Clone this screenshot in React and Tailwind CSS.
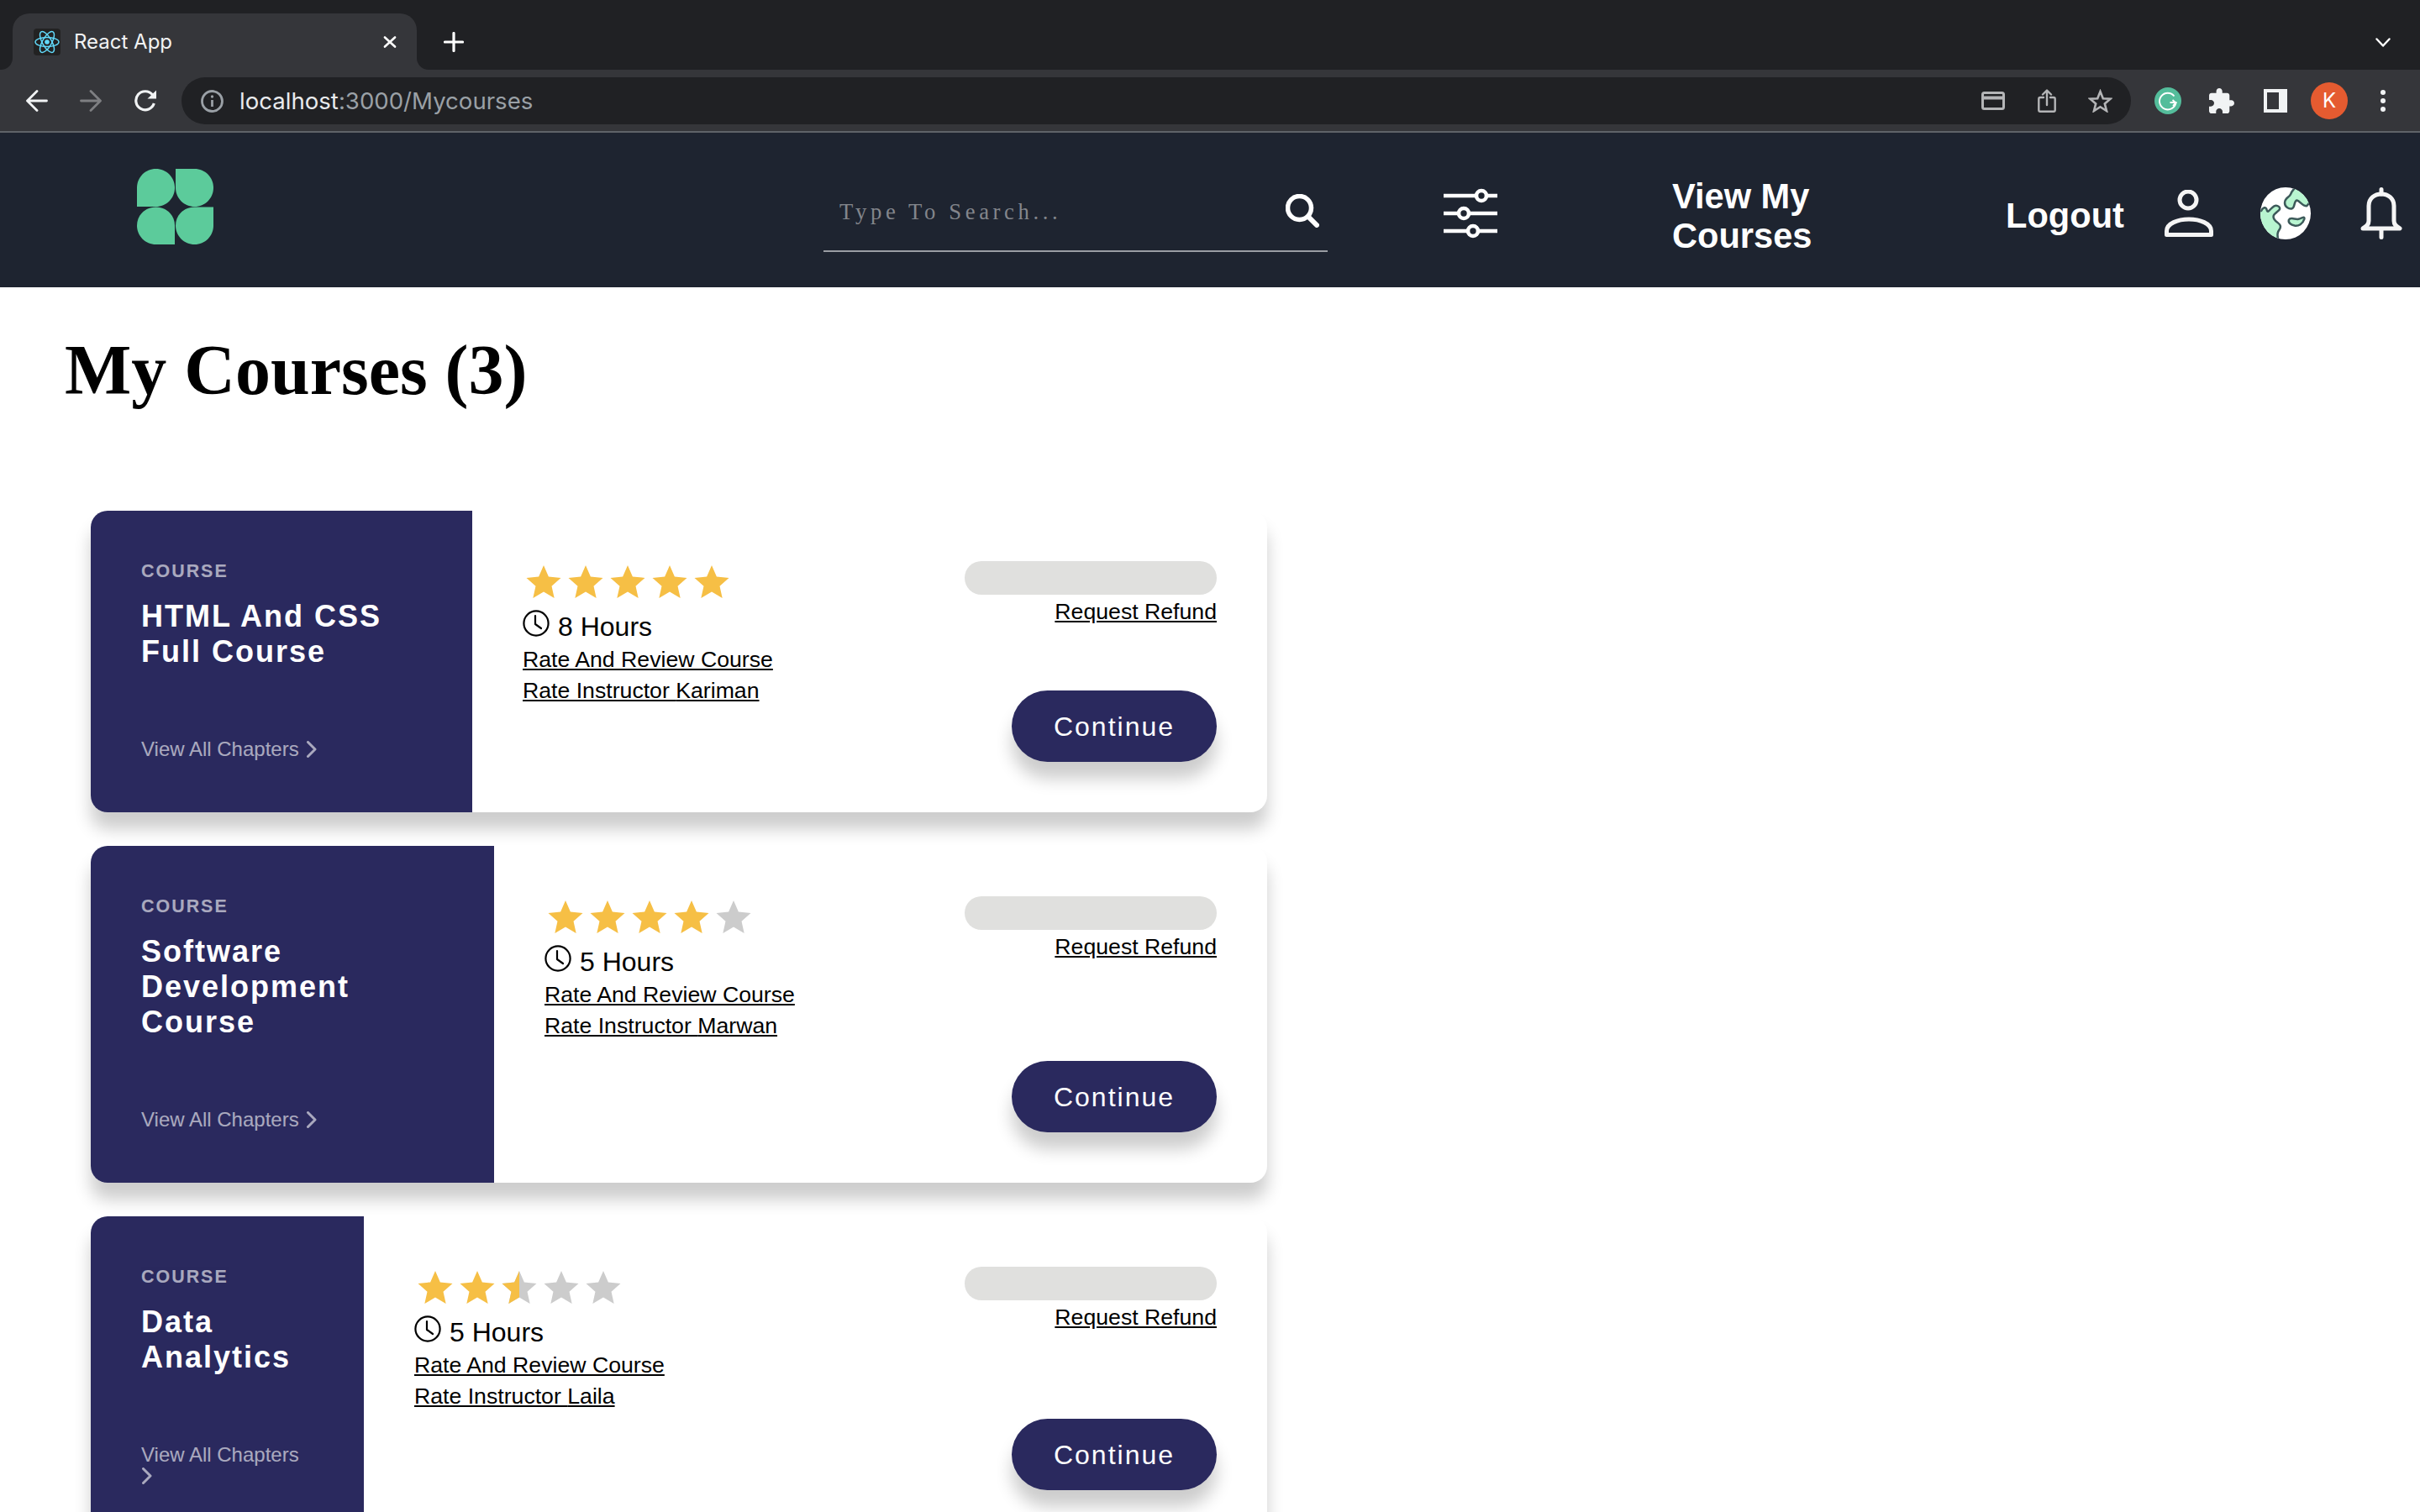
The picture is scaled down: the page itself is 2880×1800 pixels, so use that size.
import React from "react";

const SANS = "font-['Liberation_Sans',Arial,sans-serif]";
const UI = "font-['Inter',sans-serif]";

function Star({ kind }) {
  const full = "25,5 30.88,18.46 45.5,19.9 34.51,29.64 37.67,43.98 25,36.55 12.33,43.98 15.49,29.64 4.5,19.9 19.12,18.46";
  const half = "25,5 25,36.55 12.33,43.98 15.49,29.64 4.5,19.9 19.12,18.46";
  return (
    <svg viewBox="0 0 50 50" className="w-[50px] h-[50px] shrink-0">
      <polygon points={full} fill={kind === "full" ? "#f6bf45" : "#cccccc"} />
      {kind === "half" && <polygon points={half} fill="#f6bf45" />}
    </svg>
  );
}

function Clock() {
  return (
    <svg viewBox="0 0 32 32" className="w-[32px] h-[32px] shrink-0" fill="none" stroke="#000" strokeWidth="2.2" strokeLinecap="round" strokeLinejoin="round">
      <circle cx="16" cy="16" r="14.6" />
      <path d="M15 7 V17 L22 22" />
    </svg>
  );
}

function Chevron() {
  return (
    <svg viewBox="0 0 13 20" className="w-[13px] h-[20px] shrink-0" fill="none" stroke="#fff" strokeWidth="3" strokeLinecap="round" strokeLinejoin="round">
      <path d="M2.5 1.5 L11 10 L2.5 18.5" />
    </svg>
  );
}

function Course({ title, panel, rating, hours, instructor }) {
  return (
    <div className={`flex w-[1400px] rounded-[20px] overflow-hidden bg-white shadow-[0_20px_20px_rgba(0,0,0,0.2)] ${SANS}`}>
      <div className={`${panel} shrink-0 bg-[#2a295e] text-white pt-[60px] px-[60px]`}>
        <h6 className="text-[21.44px] leading-[25px] font-bold tracking-[2px] opacity-60">COURSE</h6>
        <h2 className="text-[36px] leading-[42px] font-bold tracking-[2px] mt-[20px]">{title}</h2>
        <div className="mt-[80px] flex flex-wrap items-center gap-x-[8px] text-[24px] leading-[30px] opacity-60">
          <span>View All Chapters</span>
          <Chevron />
        </div>
      </div>
      <div className="flex-1 flex justify-between p-[60px] text-black">
        <div>
          <div className="flex h-[60px]">
            {rating.map((k, i) => <Star key={i} kind={k} />)}
          </div>
          <div className="flex items-start gap-[10px] text-[32px] leading-[37px]">
            <span className="-mt-[2px]"><Clock /></span>
            <span>{hours}</span>
          </div>
          <div className="mt-[2px] text-[26.67px] leading-[37px] underline">Rate And Review Course</div>
          <div className="text-[26.67px] leading-[37px] underline">Rate Instructor {instructor}</div>
        </div>
        <div className="w-[300px] flex flex-col items-end justify-between">
          <div className="w-full flex flex-col items-end">
            <div className="w-full h-[40px] rounded-[20px] bg-[#e0e0de]" />
            <div className="mt-[2px] text-[26.67px] leading-[37px] underline">Request Refund</div>
          </div>
          <div className="w-[244px] h-[85px] rounded-[100px] bg-[#2a295e] text-white text-[32px] tracking-[2px] flex items-center justify-center shadow-[0_20px_20px_rgba(0,0,0,0.2)]">Continue</div>
        </div>
      </div>
    </div>
  );
}

function ChromeBar() {
  return (
    <div className={UI}>
      <div className="h-[83px] bg-[#202124] flex pt-[16px] pl-[15px] relative">
        <div className="absolute left-0 bottom-0 w-[15px] h-[15px] bg-[#35363a]">
          <div className="w-full h-full bg-[#202124] rounded-br-[14px]" />
        </div>
        <div className="w-[481px] h-[67px] rounded-t-[20px] bg-[#35363a] flex items-start pt-[18px] pl-[25px] relative">
          <svg viewBox="0 0 32 32" className="w-[32px] h-[32px] rounded-[4px] bg-[#222222] shrink-0" fill="none" stroke="#61dafb" strokeWidth="1.5">
            <ellipse cx="16" cy="16" rx="14" ry="5.5" />
            <ellipse cx="16" cy="16" rx="14" ry="5.5" transform="rotate(60 16 16)" />
            <ellipse cx="16" cy="16" rx="14" ry="5.5" transform="rotate(120 16 16)" />
            <circle cx="16" cy="16" r="2.8" fill="#61dafb" stroke="none" />
          </svg>
          <span className="ml-[16px] text-[24px] leading-[32px] text-[#f1f3f4]">React App</span>
          <svg viewBox="0 0 16 14" className="w-[16px] h-[14px] absolute left-[441px] top-[27px]" stroke="#fff" strokeWidth="2.6" strokeLinecap="round">
            <path d="M2 1.5 L14 12.5 M14 1.5 L2 12.5" />
          </svg>
          <div className="absolute right-[-15px] bottom-0 w-[15px] h-[15px] bg-[#35363a]">
            <div className="w-full h-full bg-[#202124] rounded-bl-[14px]" />
          </div>
        </div>
        <svg viewBox="0 0 24 24" className="w-[24px] h-[24px] ml-[32px] mt-[22px]" stroke="#fff" strokeWidth="3.2" strokeLinecap="round">
          <path d="M12 1.5 V22.5 M1.5 12 H22.5" />
        </svg>
        <svg viewBox="0 0 18 11" className="w-[18px] h-[11px] absolute left-[2827px] top-[45px]" fill="none" stroke="#fff" strokeWidth="2.4" strokeLinecap="round" strokeLinejoin="round">
          <path d="M1.5 1.5 L9 9.5 L16.5 1.5" />
        </svg>
      </div>
      <div className="h-[75px] bg-[#35363a] border-b-[2px] border-[#5f6368] flex items-start pl-[31px]">
        <svg viewBox="0 0 26 26" className="w-[26px] h-[26px] mt-[24px] shrink-0" fill="none" stroke="#f1f3f4" strokeWidth="2.8" strokeLinecap="round" strokeLinejoin="round">
          <path d="M24.5 13 H2 M13 1.5 L1.5 13 L13 24.5" />
        </svg>
        <svg viewBox="0 0 26 26" className="w-[26px] h-[26px] mt-[24px] ml-[38px] shrink-0" fill="none" stroke="#7e7f82" strokeWidth="2.8" strokeLinecap="round" strokeLinejoin="round">
          <path d="M1.5 13 H24 M13 1.5 L24.5 13 L13 24.5" />
        </svg>
        <svg viewBox="0 0 27 26" className="w-[27px] h-[26px] mt-[24px] ml-[38px] shrink-0" fill="none" stroke="#f1f3f4" strokeWidth="3.2">
          <path d="M22.5 6 A11 11 0 1 0 24.3 16" />
          <polygon points="27,0.5 27,10.5 16.5,10.5" fill="#f1f3f4" stroke="none" />
        </svg>
        <div className="w-[2320px] h-[56px] ml-[30px] mt-[9px] shrink-0 rounded-[28px] bg-[#202124] flex items-center pl-[23px] relative">
          <svg viewBox="0 0 27 27" className="w-[27px] h-[27px] shrink-0" fill="none" stroke="#9aa0a6" strokeWidth="2.8">
            <circle cx="13.5" cy="13.5" r="12" />
            <path d="M13.5 12 V20" />
            <circle cx="13.5" cy="8" r="1.7" fill="#9aa0a6" stroke="none" />
          </svg>
          <span className="ml-[19px] text-[27.6px] leading-[36px] text-[#e8eaed]">localhost<span className="text-[#9aa0a6]">:3000/Mycourses</span></span>
          <div className="flex-1" />
          <svg viewBox="0 0 28 22" className="w-[28px] h-[22px] shrink-0" fill="none" stroke="#b4b5b7" strokeWidth="3">
            <rect x="1.5" y="1.5" width="25" height="19" rx="2" />
            <path d="M1.5 7.5 H26.5" strokeWidth="4" />
          </svg>
          <svg viewBox="0 0 22 28" className="w-[22px] h-[28px] ml-[39px] shrink-0" fill="none" stroke="#b4b5b7" strokeWidth="2.4" strokeLinejoin="round" strokeLinecap="round">
            <path d="M7 10 H3 C2 10 1.3 10.7 1.3 11.7 V25 C1.3 26 2 26.7 3 26.7 H19 C20 26.7 20.7 26 20.7 25 V11.7 C20.7 10.7 20 10 19 10 H15" />
            <path d="M11 19 V2 M6 6.5 L11 1.5 L16 6.5" />
          </svg>
          <svg viewBox="0 0 29 28" className="w-[29px] h-[28px] ml-[38px] shrink-0" fill="none" stroke="#b4b5b7" strokeWidth="2.6" strokeLinejoin="miter">
            <polygon points="14.5,3 17.8,11.2 26.5,11.7 19.8,17.4 22,26 14.5,21.2 7,26 9.2,17.4 2.5,11.7 11.2,11.2" />
          </svg>
          <div className="w-[22px] shrink-0" />
        </div>
        <svg viewBox="0 0 32 32" className="w-[32px] h-[32px] ml-[28px] mt-[21px] shrink-0" fill="none">
          <circle cx="16" cy="16" r="16" fill="#54bd9b" />
          <path d="M23.5 10.5 A9.8 9.8 0 1 0 25.5 18 H18.5" stroke="#fff" strokeWidth="1.9" />
          <path d="M21.5 15 L25.5 18.5 L22 22" stroke="#fff" strokeWidth="1.9" />
        </svg>
        <svg viewBox="2 1 21 21" className="w-[30px] h-[30px] ml-[33px] mt-[22px] shrink-0" fill="#f1f3f4">
          <path d="M20.5 11H19V7c0-1.1-.9-2-2-2h-4V3.5C13 2.12 11.88 1 10.5 1S8 2.12 8 3.5V5H4c-1.1 0-1.99.9-1.99 2v3.8H3.5c1.49 0 2.7 1.21 2.7 2.7s-1.21 2.7-2.7 2.7H2V20c0 1.1.9 2 2 2h3.8v-1.5c0-1.49 1.21-2.7 2.7-2.7 1.49 0 2.7 1.21 2.7 2.7V22H17c1.1 0 2-.9 2-2v-4h1.5c1.38 0 2.5-1.12 2.5-2.5S21.88 11 20.5 11z" />
        </svg>
        <svg viewBox="0 0 28 28" className="w-[28px] h-[28px] ml-[35px] mt-[23px] shrink-0">
          <rect width="28" height="28" fill="#f1f3f4" />
          <rect x="4" y="4" width="14" height="20" fill="#35363a" />
        </svg>
        <div className="w-[44px] h-[44px] ml-[28px] mt-[15px] shrink-0 rounded-full bg-[#e55b30] text-white text-[24px] flex items-center justify-center">K</div>
        <svg viewBox="0 0 6 26" className="w-[6px] h-[26px] ml-[39px] mt-[24px] shrink-0" fill="#f1f3f4">
          <circle cx="3" cy="3" r="3" />
          <circle cx="3" cy="13" r="3" />
          <circle cx="3" cy="23" r="3" />
        </svg>
      </div>
    </div>
  );
}

function Header() {
  return (
    <div className={`h-[184px] bg-[#1e2430] flex items-start pl-[163px] text-white ${SANS}`}>
      <svg viewBox="0 0 91 90" className="w-[91px] h-[90px] mt-[43px] shrink-0" fill="#5ccb9b">
        <path d="M0 22.5 C0 10 10 0 22.5 0 C35 0 45 10 45 22.5 C45 35 35 45 22.5 45 H0 Z" />
        <path d="M46 0 H68.5 C81 0 91 10 91 22.5 C91 35 81 45 68.5 45 C56 45 46 35 46 22.5 Z" />
        <path d="M0 67.5 C0 55 10 45.5 22.5 45.5 C35 45.5 45 55 45 67.5 V90 H22.5 C10 90 0 80 0 67.5 Z" />
        <path d="M46 67.5 C46 55 56 45.5 68.5 45.5 H91 V67.5 C91 80 81 90 68.5 90 C56 90 46 80 46 67.5 Z" />
      </svg>
      <div className="w-[600px] h-[82px] ml-[726px] mt-[60px] shrink-0 border-b-[2px] border-[#9a9da3] flex items-start justify-between pl-[19px] pr-[10px] pt-[14px]">
        <span className="mt-[2px] font-['Liberation_Serif',serif] text-[26.67px] leading-[36px] tracking-[4.6px] text-[#83868c]">Type To Search...</span>
        <svg viewBox="0 0 40 40" className="-mt-[1px] w-[40px] h-[40px] shrink-0" fill="none" stroke="#fff">
          <circle cx="16.5" cy="16.5" r="14" strokeWidth="5.5" />
          <path d="M27 27 L37 37" strokeWidth="6" strokeLinecap="round" />
        </svg>
      </div>
      <svg viewBox="0 0 64 64" className="w-[64px] h-[64px] ml-[138px] mt-[64px] shrink-0" fill="#1e2430" stroke="#fff" strokeWidth="4.6">
        <path d="M1 11 H63 M1 32 H63 M1 53 H63" strokeLinecap="round" />
        <circle cx="45" cy="11" r="6" />
        <circle cx="24" cy="32" r="6" />
        <circle cx="35" cy="53" r="6" />
      </svg>
      <div className="w-[170px] ml-[208px] mt-[52px] shrink-0 text-[41.6px] leading-[47px] font-bold">View My Courses</div>
      <div className="w-[140px] ml-[227px] mt-[75px] shrink-0 text-[41.6px] leading-[47px] font-bold whitespace-nowrap">Logout</div>
      <svg viewBox="0 0 58 56" className="w-[58px] h-[56px] ml-[49px] mt-[68px] shrink-0" fill="none" stroke="#f5f5f5" strokeWidth="5">
        <circle cx="28" cy="12" r="10" />
        <path d="M2.5 53.5 H55.5 V49 C55.5 40 42 35 29 35 C16 35 2.5 40 2.5 49 Z" strokeLinejoin="round" />
      </svg>
      <svg viewBox="0 0 64 66" className="w-[62px] h-[66px] ml-[55px] mt-[63px] shrink-0">
        <defs>
          <clipPath id="earth"><ellipse cx="32" cy="33" rx="31" ry="32" /></clipPath>
        </defs>
        <ellipse cx="32" cy="33" rx="31" ry="32" fill="#ffffff" />
        <g clipPath="url(#earth)" fill="#b8f5d0" stroke="#3d5a5a" strokeWidth="2.6" strokeLinejoin="round">
          <path d="M-2 30 L2 30 C4 26 8 24 9 29 C10 34 14 26 18 24 C22 22 27 26 24 29 C20 33 15 35 18 40 C21 45 28 46 25 52 C23 55 21 57 23 66 L-2 66 Z" />
          <path d="M31 20 C31 14 37 13 38 10 C39 6 42 4 44 1 L68 12 L58 24 C52 24 50 18 46 17 C42 17 44 26 40 27 C36 28 31 25 31 20 Z" />
          <path d="M36 41 C38 37 44 41 48 40 C52 39 56 36 55 40 C53 46 48 49 43 48 C39 47 35 45 36 41 Z" />
        </g>
      </svg>
      <svg viewBox="0 0 50 62" className="w-[50px] h-[62px] ml-[58px] mt-[65px] shrink-0" fill="none" stroke="#f5f5f5" strokeWidth="5" strokeLinecap="round" strokeLinejoin="round">
        <path d="M3 49 C8 46 10 44 10 40 V22 C10 13 17 8 25 8 C33 8 40 13 40 22 V40 C40 44 42 46 47 49 Z" />
        <path d="M25 2.5 V8 M25 50 V59.5" />
      </svg>
    </div>
  );
}

export default function App() {
  return (
    <div className="w-[2880px] h-[1800px] overflow-hidden bg-white">
      <ChromeBar />
      <Header />
      <h1 className="font-['Liberation_Serif',serif] font-bold text-[84px] leading-[96px] text-black ml-[77px] mt-[51px]">My Courses (3)</h1>
      <div className="ml-[108px] mt-[119px] flex flex-col gap-[40px]">
        <Course title="HTML And CSS Full Course" panel="w-[454px] pb-[60px]" rating={["full", "full", "full", "full", "full"]} hours="8 Hours" instructor="Kariman" />
        <Course title="Software Development Course" panel="w-[480px] pb-[60px]" rating={["full", "full", "full", "full", "empty"]} hours="5 Hours" instructor="Marwan" />
        <Course title="Data Analytics" panel="w-[325px] pb-[67px]" rating={["full", "full", "half", "empty", "empty"]} hours="5 Hours" instructor="Laila" />
      </div>
    </div>
  );
}
